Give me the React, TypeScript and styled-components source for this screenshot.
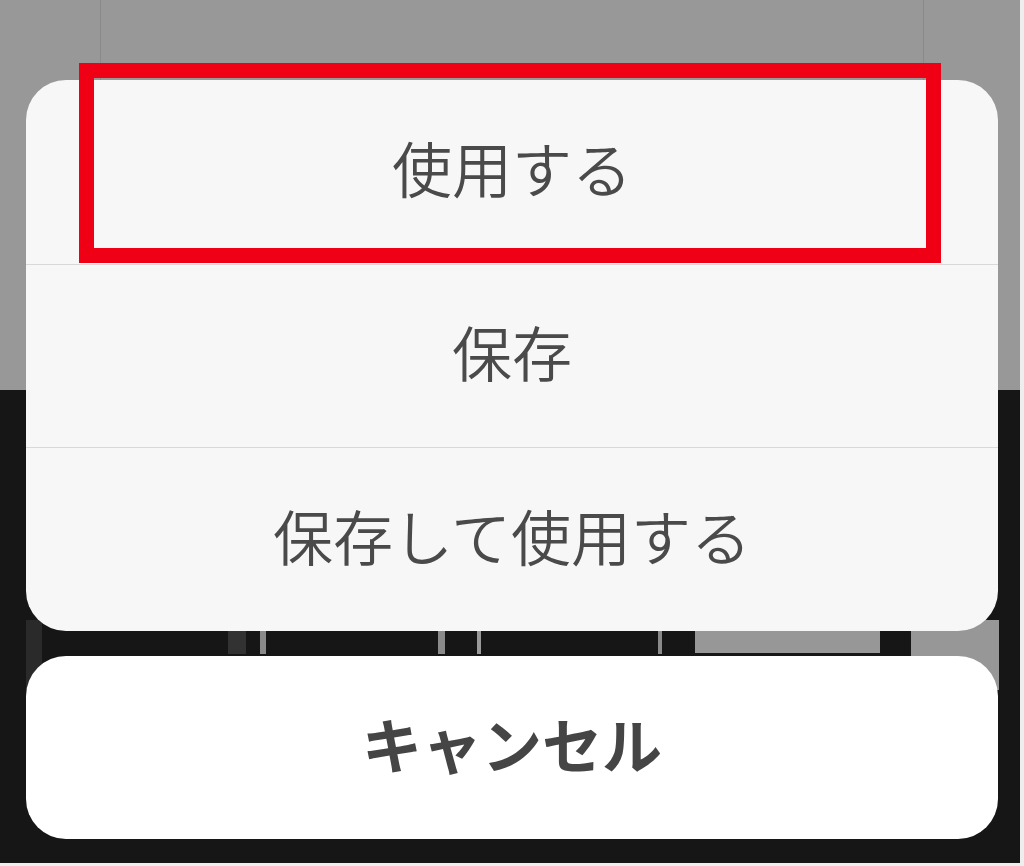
import React from 'react'
import styled, { createGlobalStyle } from 'styled-components'

const GlobalStyle = createGlobalStyle`
  html, body {
    margin: 0;
    padding: 0;
    background: #eeeeee;
  }
  body {
    font-family: 'Noto Sans CJK JP', 'Noto Sans', sans-serif;
  }
`

const Screen = styled.div`
  position: relative;
  width: 1020px;
  height: 863px;
  overflow: hidden;
  display: flex;
  flex-direction: column;
`

// photo of the screen behind the action sheet
const TopArea = styled.div`
  height: 390px;
  background: #989898;
  display: flex;
  padding-left: 100px;
  box-sizing: border-box;
`

const TopCell = styled.div`
  width: 822px;
  border-left: 1px solid #8a8a8a;
  border-right: 1px solid #8a8a8a;
`

const BottomArea = styled.div`
  flex: 1;
  background: #161616;
  padding-top: 230px;
`

const KeyStrip = styled.div`
  display: flex;
  align-items: flex-start;
  height: 70px;
`

const Key = styled.div<{ $w: number; $color?: string; $h?: number }>`
  flex: 0 0 ${({ $w }) => $w}px;
  height: ${({ $h }) => ($h ? `${$h}px` : '100%')};
  background: ${({ $color }) => $color ?? 'transparent'};
`

const Sheet = styled.div`
  position: absolute;
  left: 26px;
  top: 80px;
  width: 972px;
  display: flex;
  flex-direction: column;
  gap: 25px;
`

const Group = styled.div`
  background: #f7f7f8;
  border-radius: 40px;
  overflow: hidden;
  display: flex;
  flex-direction: column;
`

const Action = styled.div<{ $bold?: boolean }>`
  height: 183.5px;
  box-sizing: border-box;
  padding-bottom: 9px;
  display: flex;
  align-items: center;
  justify-content: center;
  font-size: 60px;
  line-height: 1;
  font-weight: ${({ $bold }) => ($bold ? 700 : 350)};
  color: ${({ $bold }) => ($bold ? '#454545' : '#4a4a4a')};
  & + & {
    border-top: 1.5px solid #d9d9db;
  }
`

const CancelCard = styled(Group)`
  background: #ffffff;
`

const Highlight = styled.div`
  position: absolute;
  left: 79px;
  top: 63px;
  width: 862px;
  height: 200px;
  box-sizing: border-box;
  border: 15px solid #f00014;
`

const keys: { w: number; color?: string; h?: number }[] = [
  { w: 26 },
  { w: 16, color: '#2a2a2a' },
  { w: 186 },
  { w: 18, color: '#323232', h: 34 },
  { w: 14 },
  { w: 6, color: '#8a8a8a', h: 34 },
  { w: 172 },
  { w: 7, color: '#8a8a8a', h: 34 },
  { w: 32 },
  { w: 4, color: '#9a9a9a', h: 34 },
  { w: 177 },
  { w: 4, color: '#8a8a8a', h: 34 },
  { w: 33 },
  { w: 185, color: '#979797', h: 33 },
  { w: 31 },
  { w: 88, color: '#979797' },
]

export default function App() {
  return (
    <>
      <GlobalStyle />
      <Screen>
        <TopArea>
          <TopCell />
        </TopArea>
        <BottomArea>
          <KeyStrip>
            {keys.map((k, i) => (
              <Key key={i} $w={k.w} $color={k.color} $h={k.h} />
            ))}
          </KeyStrip>
        </BottomArea>

        <Sheet>
          <Group>
            <Action>使用する</Action>
            <Action>保存</Action>
            <Action>保存して使用する</Action>
          </Group>
          <CancelCard>
            <Action $bold>キャンセル</Action>
          </CancelCard>
        </Sheet>

        <Highlight />
      </Screen>
    </>
  )
}
